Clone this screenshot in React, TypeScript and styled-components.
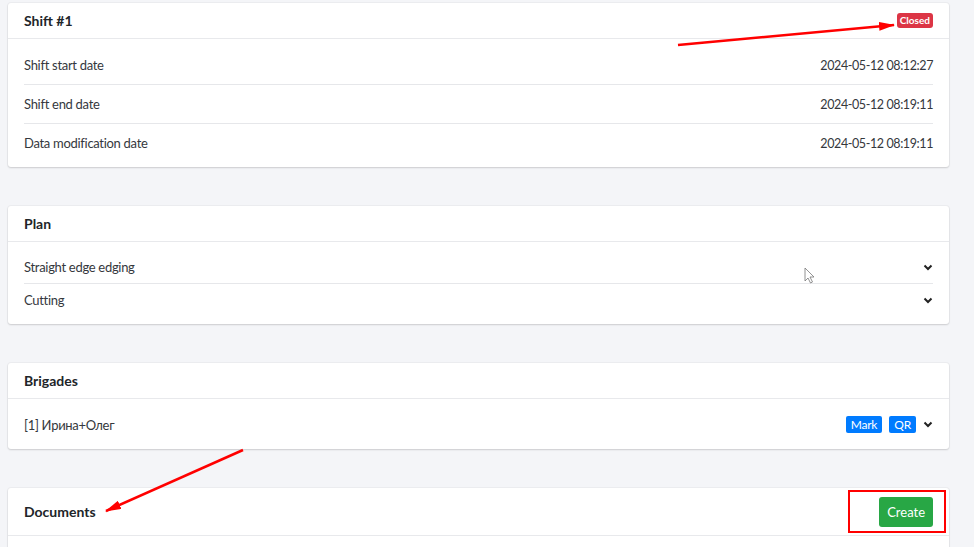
import React from "react";
import styled, { createGlobalStyle } from "styled-components";

const Global = createGlobalStyle`
  html, body {
    margin: 0;
    padding: 0;
    background: #f4f5f8;
    font-family: "Lato", "Open Sans", sans-serif;
    color: #212529;
  }
`;

const Page = styled.div`
  position: relative;
  width: 974px;
  height: 547px;
  overflow: hidden;
  box-sizing: border-box;
  padding: 3px 25px 0 8px;
  display: flex;
  flex-direction: column;
  gap: 39px;
`;

const Card = styled.section`
  background: #fff;
  border-radius: 3px;
  box-shadow: 0 1px 2px rgba(0, 0, 0, 0.14), 0 0 0 1px rgba(0, 0, 0, 0.03);
  flex-shrink: 0;
`;

const CardHeader = styled.header<{ tall?: boolean }>`
  height: ${(p) => (p.tall ? "48px" : "36px")};
  box-sizing: border-box;
  padding: 0 16px;
  display: flex;
  align-items: center;
  justify-content: space-between;
  border-bottom: 1px solid #e8e9ec;
`;

const Title = styled.h2`
  margin: 0;
  font-size: 14px;
  font-weight: 700;
  color: #212529;
`;

const CardBody = styled.div<{ pad: string }>`
  padding: ${(p) => p.pad};
`;

const Row = styled.div<{ h: number }>`
  height: ${(p) => p.h}px;
  display: flex;
  align-items: center;
  justify-content: space-between;
  font-size: 13px;
  letter-spacing: -0.3px;
  color: #35383d;
  & + & {
    border-top: 1px solid #e6e7ea;
  }
`;

const Value = styled.span`
  font-size: 12.5px;
  letter-spacing: -0.4px;
  color: #35383d;
`;

const Badge = styled.span`
  background: #dc3545;
  color: #fff;
  font-size: 10px;
  font-weight: 700;
  padding: 1px 3px 2px;
  border-radius: 3px;
  line-height: 12px;
`;

const Actions = styled.div`
  display: flex;
  align-items: center;
  gap: 7px;
`;

const SmallButton = styled.button`
  background: #007bff;
  color: #fff;
  border: none;
  border-radius: 2px;
  font-family: inherit;
  font-size: 12px;
  letter-spacing: -0.2px;
  height: 17px;
  padding: 0 5px;
  line-height: 17px;
`;

const CreateButton = styled.button`
  background: #28a745;
  color: #fff;
  border: none;
  border-radius: 3px;
  font-family: inherit;
  font-size: 13px;
  height: 30px;
  padding: 0 8px;
`;

const Highlight = styled.div`
  border: 2px solid #ff0000;
  padding: 5px 11px 4px 29px;
  margin-right: -13px;
  display: flex;
`;

const Overlay = styled.svg`
  position: absolute;
  left: 0;
  top: 0;
  pointer-events: none;
`;

const Chevron = () => (
  <svg width="10" height="7" viewBox="0 0 10 7">
    <polyline points="1.5,1.5 5,5 8.5,1.5" fill="none" stroke="#222" strokeWidth="2" />
  </svg>
);

export default function App() {
  return (
    <>
      <Global />
      <Page>
        <Card>
          <CardHeader>
            <Title>Shift #1</Title>
            <Badge>Closed</Badge>
          </CardHeader>
          <CardBody pad="7px 16px 5px">
            <Row h={38}>
              <span>Shift start date</span>
              <Value>2024-05-12 08:12:27</Value>
            </Row>
            <Row h={38}>
              <span>Shift end date</span>
              <Value>2024-05-12 08:19:11</Value>
            </Row>
            <Row h={38}>
              <span>Data modification date</span>
              <Value>2024-05-12 08:19:11</Value>
            </Row>
          </CardBody>
        </Card>

        <Card>
          <CardHeader>
            <Title>Plan</Title>
          </CardHeader>
          <CardBody pad="9px 16px 8px">
            <Row h={32}>
              <span>Straight edge edging</span>
              <Chevron />
            </Row>
            <Row h={32}>
              <span>Cutting</span>
              <Chevron />
            </Row>
          </CardBody>
        </Card>

        <Card>
          <CardHeader>
            <Title>Brigades</Title>
          </CardHeader>
          <CardBody pad="9px 16px 8px">
            <Row h={33}>
              <span>[1] Ирина+Олег</span>
              <Actions>
                <SmallButton>Mark</SmallButton>
                <SmallButton>QR</SmallButton>
                <Chevron />
              </Actions>
            </Row>
          </CardBody>
        </Card>

        <Card>
          <CardHeader tall>
            <Title>Documents</Title>
            <Highlight>
              <CreateButton>Create</CreateButton>
            </Highlight>
          </CardHeader>
          <CardBody pad="20px 16px" />
        </Card>

        <Overlay width="974" height="547">
          <defs>
            <marker id="ah2" markerWidth="16" markerHeight="9" refX="15" refY="4.5" orient="auto" markerUnits="userSpaceOnUse">
              <polygon points="0,0 16,4.5 0,9" fill="#ff0000" />
            </marker>
          </defs>
          <line x1="678" y1="45" x2="894" y2="25" stroke="#ff0000" strokeWidth="2.5" markerEnd="url(#ah2)" />
          <line x1="243" y1="450" x2="106" y2="511" stroke="#ff0000" strokeWidth="2.5" markerEnd="url(#ah2)" />
          <path
            d="M805 268 L805 281 L808 278 L810.5 283 L812.5 282 L810 277 L814 277 Z"
            fill="#fff"
            stroke="#777"
            strokeWidth="0.8"
          />
        </Overlay>
      </Page>
    </>
  );
}
